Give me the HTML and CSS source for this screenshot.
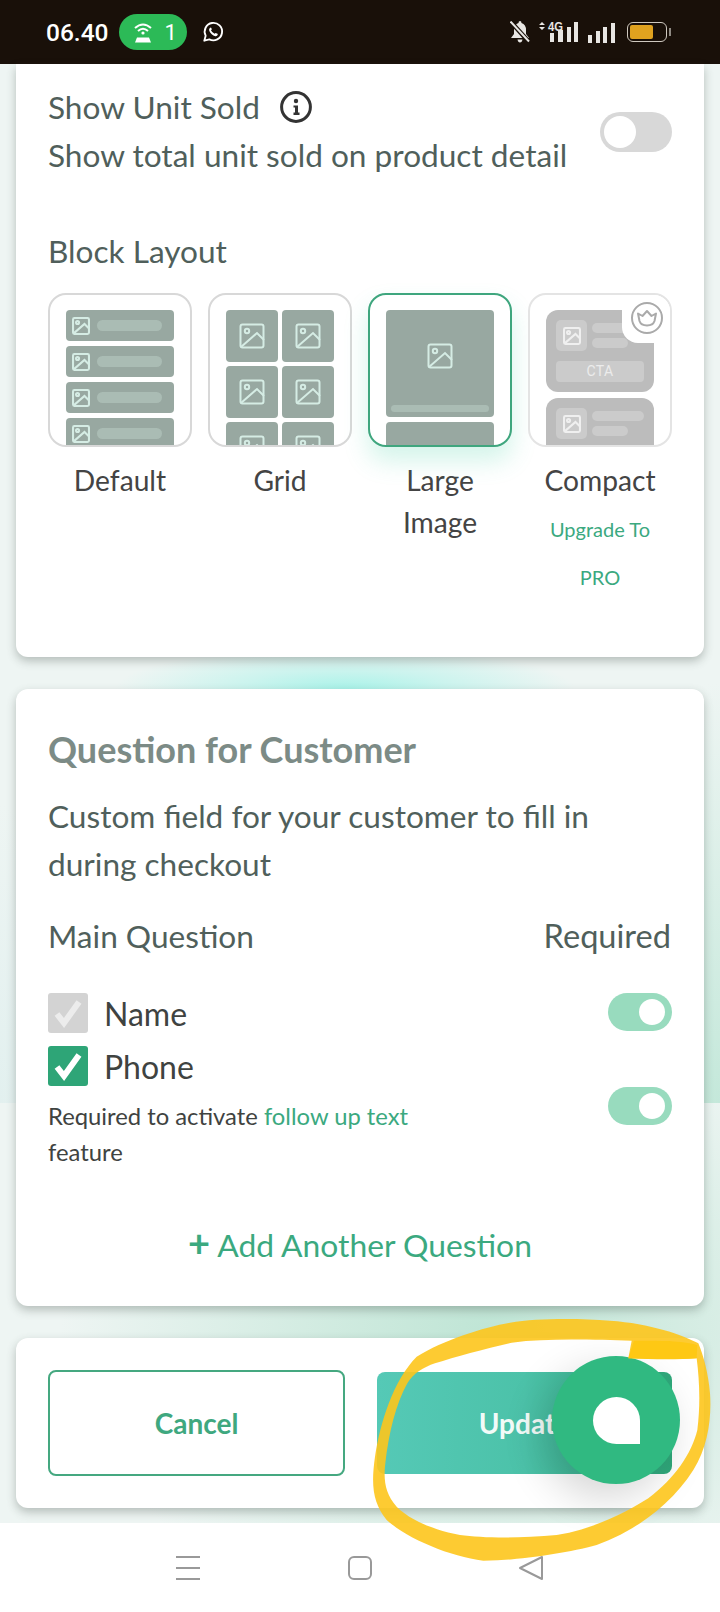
FILE: index.html
```html
<!DOCTYPE html>
<html lang="en">
<head>
<meta charset="utf-8">
<title>Block Layout</title>
<link rel="stylesheet" href="styles.css">
</head>
<body>
<svg class="defs" width="0" height="0" aria-hidden="true">
  <symbol id="pic" viewBox="0 0 26 26">
    <rect x="1.5" y="1.5" width="23" height="23" rx="2" fill="none" stroke="currentColor"/>
    <circle cx="8" cy="8" r="2.2" fill="none" stroke="currentColor"/>
    <path d="M2 24 L18 10 L25 17" fill="none" stroke="currentColor"/>
  </symbol>
</svg>
<div class="phone">
  <header class="status">
    <div class="status-left">
      <span class="time">06.40</span>
      <span class="hotspot">
        <svg class="hot-icon" viewBox="0 0 20 21"><path d="M2 6 Q10 -1 18 6 M5 9 Q10 4.5 15 9" fill="none" stroke="#fff" stroke-width="2"/><circle cx="10" cy="11" r="1.6" fill="#fff"/><path d="M2 20.5 L4 15.5 H16 L18 20.5 Z" fill="#fff"/></svg>
        <span>1</span>
      </span>
      <svg class="wa" viewBox="0 0 24 24"><path d="M2.5 21.5 L4 16 A9.5 9.5 0 1 1 8 20 Z" fill="none" stroke="#fff" stroke-width="2" stroke-linejoin="round"/><path d="M8.5 7.5 Q7.2 9 8 11 Q10 15.5 14.5 16.5 Q16.5 16.8 17.2 15 L17 14 L14.8 13 L13.8 14 Q11 13 9.8 10.2 L10.8 9 L9.8 7 Z" fill="#fff"/></svg>
    </div>
    <div class="status-right">
      <svg class="bell" viewBox="0 0 20 22"><path d="M10 0 Q11.5 0 11.5 2 Q16 3.5 16 9 V13 L19 17 H1 L4 13 V9 Q4 3.5 8.5 2 Q8.5 0 10 0 Z M7.5 18.5 H12.5 Q12 21.5 10 21.5 Q8 21.5 7.5 18.5 Z" fill="#e8e6e3"/><path d="M1 1 L19 21" stroke="#191009" stroke-width="4.5"/><path d="M0.5 0.5 L19 20.5" stroke="#e8e6e3" stroke-width="2"/></svg>
      <svg class="signal" viewBox="0 0 40 22"><path d="M0 4 L3 1 L6 4 Z M0 6 L3 9 L6 6 Z" fill="#e8e6e3"/><rect x="11" y="12" width="4" height="9" fill="#e8e6e3"/><rect x="19" y="9" width="5" height="12" fill="#e8e6e3"/><rect x="28" y="6" width="4" height="15" fill="#e8e6e3"/><rect x="35" y="1" width="4" height="20" fill="#e8e6e3"/><text x="9" y="10" class="lte" textLength="15" lengthAdjust="spacingAndGlyphs">4G</text></svg>
      <svg class="signal2" viewBox="0 0 28 21"><rect x="0" y="13" width="4" height="8" fill="#e8e6e3"/><rect x="8" y="9" width="4" height="12" fill="#e8e6e3"/><rect x="15" y="5" width="4" height="16" fill="#e8e6e3"/><rect x="23" y="1" width="4" height="20" fill="#e8e6e3"/></svg>
      <span class="battery"><span class="battery-fill"></span></span>
    </div>
  </header>

  <main class="content">
    <section class="card card-top">
      <div class="unit-row">
        <div class="unit-text">
          <div class="line unit-title">Show Unit Sold
            <svg class="info" viewBox="0 0 32 32"><circle cx="16" cy="16" r="14.4" fill="none" stroke="#333" stroke-width="3"/><circle cx="16" cy="10" r="2.2" fill="#333"/><path d="M13.5 14.5 H18 V21.5 H19.5 V24 H13.5 V21.5 H15 V16.5 H13.5 Z" fill="#333"/></svg>
          </div>
          <div class="line">Show total unit sold on product detail</div>
        </div>
        <span class="toggle toggle-off"><span class="knob"></span></span>
      </div>

      <h3 class="line block-title">Block Layout</h3>
      <div class="layouts">
        <div class="layout">
          <div class="tile">
            <div class="preview stack">
              <div class="row"><svg class="pic-s"><use href="#pic"/></svg><i class="bar"></i></div>
              <div class="row"><svg class="pic-s"><use href="#pic"/></svg><i class="bar"></i></div>
              <div class="row"><svg class="pic-s"><use href="#pic"/></svg><i class="bar"></i></div>
              <div class="row"><svg class="pic-s"><use href="#pic"/></svg><i class="bar"></i></div>
            </div>
          </div>
          <div class="layout-name">Default</div>
        </div>
        <div class="layout">
          <div class="tile">
            <div class="preview gridded">
              <div class="cell"><svg class="pic-m"><use href="#pic"/></svg></div>
              <div class="cell"><svg class="pic-m"><use href="#pic"/></svg></div>
              <div class="cell"><svg class="pic-m"><use href="#pic"/></svg></div>
              <div class="cell"><svg class="pic-m"><use href="#pic"/></svg></div>
              <div class="cell"><svg class="pic-m"><use href="#pic"/></svg></div>
              <div class="cell"><svg class="pic-m"><use href="#pic"/></svg></div>
            </div>
          </div>
          <div class="layout-name">Grid</div>
        </div>
        <div class="layout">
          <div class="tile tile-on">
            <div class="preview stack">
              <div class="big"><svg class="pic-m"><use href="#pic"/></svg><i class="big-bar"></i></div>
              <div class="big"></div>
            </div>
          </div>
          <div class="layout-name">Large Image</div>
        </div>
        <div class="layout">
          <div class="tile tile-pro">
            <div class="preview stack-pro">
              <div class="pro">
                <div class="pro-top">
                  <span class="pro-pic"><svg class="pic-s"><use href="#pic"/></svg></span>
                  <span class="pro-bars"><i></i><i class="short"></i></span>
                </div>
                <div class="cta">CTA</div>
              </div>
              <div class="pro">
                <div class="pro-top">
                  <span class="pro-pic"><svg class="pic-s"><use href="#pic"/></svg></span>
                  <span class="pro-bars"><i></i><i class="short"></i></span>
                </div>
              </div>
            </div>
            <span class="crown">
              <svg viewBox="0 0 34 34"><circle cx="17" cy="17" r="15" fill="none" stroke="#aaa" stroke-width="2"/><path d="M8 12.5 L12.5 15 L17 10 L21.5 15 L26 12.5 L24.5 20 Q23 24.5 17 24.5 Q11 24.5 9.5 20 Z" fill="none" stroke="#aaa" stroke-width="2" stroke-linejoin="round"/></svg>
            </span>
          </div>
          <div class="layout-name">Compact</div>
          <div class="upgrade">Upgrade To PRO</div>
        </div>
      </div>
    </section>

    <section class="card card-q">
      <h2 class="q-title">Question for Customer</h2>
      <p class="q-desc">Custom field for your customer to fill in during checkout</p>
      <div class="q-head"><span>Main Question</span><span class="q-required">Required</span></div>
      <div class="q-body">
        <div class="q-list">
          <div class="check-row"><span class="check check-off"><svg viewBox="0 0 40 40"><path d="M9 21 L16 30 L31 9" fill="none" stroke="currentColor" stroke-width="6"/></svg></span><span>Name</span></div>
          <div class="check-row"><span class="check check-on"><svg viewBox="0 0 40 40"><path d="M9 21 L16 30 L31 9" fill="none" stroke="currentColor" stroke-width="6"/></svg></span><span>Phone</span></div>
          <p class="q-note">Required to activate <span class="link">follow up text</span> feature</p>
        </div>
        <div class="q-toggles">
          <span class="toggle toggle-on"><span class="knob"></span></span>
          <span class="toggle toggle-on"><span class="knob"></span></span>
        </div>
      </div>
      <div class="add"><span class="plus">+</span> Add Another Question</div>
    </section>

    <section class="card card-actions">
      <button class="btn btn-cancel">Cancel</button>
      <button class="btn btn-update">Update</button>
    </section>
  </main>

  <nav class="navbar">
    <svg class="nav-menu" viewBox="0 0 26 26"><path d="M1 2 H25 M1 13 H25 M1 24 H25" stroke="#999" stroke-width="2"/></svg>
    <svg class="nav-home" viewBox="0 0 26 26"><rect x="2" y="2" width="22" height="22" rx="5" fill="none" stroke="#999" stroke-width="2"/></svg>
    <svg class="nav-back" viewBox="0 0 26 26"><path d="M2 13 L24 2 V24 Z" fill="none" stroke="#999" stroke-width="2" stroke-linejoin="round"/></svg>
  </nav>

  <div class="fab"><span class="bubble"></span></div>
  <svg class="scribble" viewBox="0 0 1110 966"><path fill-rule="evenodd" d="M1045 160 C1000 135 900 100 780 92 C680 85 560 85 480 98 C400 112 280 150 200 200 C130 270 90 400 75 500 C62 590 70 640 110 690 C170 745 300 800 400 812 C500 812 650 790 740 765 C850 725 960 650 1030 540 C1075 470 1085 380 1080 310 C1075 250 1060 195 1045 160 Z M1040 205 C1048 270 1052 340 1042 420 C1025 490 975 565 895 625 C815 675 720 720 620 735 C520 745 400 745 330 735 C250 720 180 690 140 650 C105 610 100 570 106 520 C116 430 138 340 172 280 C190 250 220 232 255 220 C315 200 400 178 485 158 C600 143 740 150 845 152 L835 205 C900 205 980 210 1040 205 Z" fill="#fdc51c" opacity=".9"/><path d="M852 152 C920 152 990 150 1042 165 L1040 205 C980 210 900 208 835 205 Z" fill="#fec814"/></svg>
</div>
</body>
</html>
```
FILE: styles.css
```css
* { box-sizing: border-box; }
html, body { margin: 0; padding: 0; }
body { font-family: Lato, "Liberation Sans", sans-serif; color: #505f5b; background: #fff; }
.defs { position: absolute; }
.phone { position: relative; width: 720px; height: 1612px; overflow: hidden; display: flex; flex-direction: column; }

.status { height: 64px; background: #191009; display: flex; justify-content: space-between; align-items: center; padding: 0 49px 0 46px; color: #fff; flex: none; }
.status-left, .status-right { display: flex; align-items: center; }
.time { font-size: 24.5px; font-weight: 500; font-family: Roboto, sans-serif; }
.hotspot { margin-left: 10px; width: 68px; height: 36px; border-radius: 18px; background: #2cba57; display: flex; align-items: center; padding-left: 14px; gap: 12px; font-family: Roboto, sans-serif; font-size: 22px; }
.hot-icon { width: 20px; height: 21px; }
.wa { width: 22px; height: 22px; margin-left: 15px; }
.bell { width: 20px; height: 22px; }
.signal { width: 40px; height: 22px; margin-left: 9px; }
.lte { font: bold 12px "Liberation Sans", sans-serif; fill: #e8e6e3; }
.signal2 { width: 28px; height: 21px; margin-left: 9px; }
.battery { width: 40px; height: 20px; border: 1.5px solid #cfc9c0; border-radius: 6px; margin-left: 11px; margin-right: 4px; padding: 1.5px; display: block; position: relative; }
.battery::after { content: ""; position: absolute; right: -5px; top: 4.5px; width: 2px; height: 8px; background: #8f8a83; }
.battery-fill { display: block; width: 23px; height: 14px; background: #e0a21f; border-radius: 2px; }

.content { flex: 1; min-height: 0; padding: 0 16px 15px; display: flex; flex-direction: column; gap: 32px; background-color: #eef5f3; background-repeat: no-repeat;
  background-image:
    radial-gradient(ellipse 230px 42px at 345px 625px, #a9f3e9 0%, rgba(175,243,234,.55) 45%, rgba(238,245,243,0) 100%),
    radial-gradient(ellipse 300px 420px at 720px 1039px, #c4e8da 0%, rgba(196,232,218,0) 100%),
    radial-gradient(ellipse 80px 300px at 0 1039px, #e2f0ef 0%, rgba(226,240,239,0) 100%),
    radial-gradient(ellipse 430px 300px at 490px 1266px, #bfe5d5 0%, rgba(191,229,213,0) 100%);
  background-size: 720px 1459px, 720px 1039px, 720px 1039px, 720px 1459px;
}
.card { background: #fff; border-radius: 12px; box-shadow: 0 4px 10px rgba(60,70,66,.32); padding: 0 32px; flex: none; }
.card-top { height: 593px; border-radius: 0 0 12px 12px; padding-top: 19px; }
.line { font-size: 31.6px; line-height: 48px; color: #505f5b; margin: 0; font-weight: 400; }

.unit-row { display: flex; justify-content: space-between; align-items: center; }
.unit-title { display: flex; align-items: center; gap: 20px; }
.info { width: 32px; height: 32px; }
.toggle { display: block; border-radius: 20px; position: relative; flex: none; }
.toggle-off { width: 72px; height: 40px; background: #d8d8d8; margin-top: 2px; }
.toggle-off .knob { position: absolute; left: 4px; top: 4px; width: 32px; height: 32px; background: #fff; border-radius: 50%; }
.toggle-on { width: 64px; height: 38px; background: #98dbbe; }
.toggle-on .knob { position: absolute; right: 7px; top: 6px; width: 26px; height: 26px; background: #fff; border-radius: 50%; }

.block-title { margin-top: 48px; margin-bottom: 18px; }
.layouts { display: grid; grid-template-columns: repeat(4, 144px); gap: 16px; }
.layout { text-align: center; }
.tile { position: relative; height: 154px; border: 2px solid #d8d8d8; border-radius: 18px; padding: 15px 16px 0; overflow: hidden; background: #fff; color: #d5ece4; }
.tile-on { border-color: #3fa67e; box-shadow: 0 14px 24px rgba(60,205,160,.22); overflow: visible; }
.tile-on .preview { overflow: hidden; height: 135px; }
.tile-pro { border-color: #e4e4e4; }
.preview { width: 108px; }
.stack { display: flex; flex-direction: column; gap: 5px; }
.row { flex: none; height: 31px; background: #98a8a1; border-radius: 4px; display: flex; align-items: center; padding-left: 6px; gap: 7px; }
.pic-s { width: 18px; height: 18px; flex: none; display: block; stroke-width: 3; }
.pic-m { width: 26px; height: 26px; display: block; stroke-width: 2; }
.bar { width: 65px; height: 11px; border-radius: 6px; background: #aabcb4; display: block; }
.gridded { display: grid; grid-template-columns: 52px 52px; gap: 4px; }
.cell { height: 52px; background: #98a8a1; border-radius: 4px; display: flex; align-items: center; justify-content: center; }
.big { flex: none; height: 107px; background: #98a8a1; border-radius: 4px; position: relative; display: flex; justify-content: center; padding-top: 33px; }
.big-bar { position: absolute; left: 5px; right: 5px; bottom: 5px; height: 7px; border-radius: 4px; background: #aabcb4; }
.stack-pro { display: flex; flex-direction: column; gap: 6px; }
.pro { flex: none; background: #bcbcbc; border-radius: 12px; padding: 10px; height: 82px; }
.pro-top { display: flex; gap: 5px; align-items: flex-start; }
.pro-pic { width: 31px; height: 31px; background: #cbcbcb; border-radius: 5px; display: flex; align-items: center; justify-content: center; color: #efefef; flex: none; }
.pro-bars { flex: 1; display: flex; flex-direction: column; gap: 5px; padding-top: 3px; }
.pro-bars i { display: block; height: 10px; border-radius: 5px; background: #cbcbcb; }
.pro-bars i.short { width: 36px; }
.cta { margin-top: 10px; height: 21px; border-radius: 4px; background: #cbcbcb; color: #ececec; font: 14px/21px Roboto, sans-serif; text-align: center; letter-spacing: .3px; }
.crown { position: absolute; right: -2px; top: -2px; width: 50px; height: 50px; background: #fff; border-radius: 0 16px 0 16px; display: flex; align-items: center; justify-content: center; }
.crown svg { width: 34px; height: 34px; }
.layout-name { margin-top: 12px; font-size: 28.2px; line-height: 42px; color: #444; }
.upgrade { margin-top: 4px; font-size: 20px; line-height: 48px; color: #3ba97f; padding: 0 20px; }

.card-q { height: 617px; padding-top: 34px; }
.q-title { margin: 0; font-size: 36px; line-height: 52px; font-weight: 700; color: #7c8b86; }
.q-desc { margin: 17px 0 0; font-size: 31.6px; line-height: 48px; }
.q-head { display: flex; justify-content: space-between; font-size: 31.6px; line-height: 48px; margin-top: 24px; }
.q-required { font-size: 32.6px; margin-right: 1px; }
.q-body { display: flex; justify-content: space-between; margin-top: 33px; }
.q-list { width: 400px; }
.check-row { display: flex; align-items: center; gap: 16px; height: 40px; margin-bottom: 13px; font-size: 32px; color: #3f4341; }
.check { width: 40px; height: 40px; border-radius: 3px; display: block; flex: none; }
.check svg { display: block; width: 40px; height: 40px; }
.check-off { background: #d3d3d3; color: #ececec; }
.check-on { background: #2ea577; color: #fff; }
.q-note { margin: -1px 0 0; font-size: 23.8px; line-height: 36px; color: #3f4341; }
.link { color: #3ba97f; }
.q-toggles { display: flex; flex-direction: column; gap: 56px; }
.add { margin-top: 51px; text-align: center; font-size: 31.8px; line-height: 48px; color: #3ba97f; }
.plus { font-weight: 700; font-size: 38px; line-height: 40px; }

.card-actions { height: 170px; display: flex; justify-content: space-between; align-items: center; padding: 0 32px; }
.btn { font-family: Lato, sans-serif; font-weight: 700; font-size: 28px; border-radius: 8px; }
.btn-cancel { width: 297px; height: 106px; background: #fff; border: 2px solid #45a880; color: #3fa87f; }
.btn-update { width: 295px; height: 102px; border: 0; color: #f2fbf8; background: linear-gradient(to right, #55c9b6 0%, #4cc2a9 50%, #2fa87a 100%); }

.navbar { height: 89px; flex: none; background: #fff; display: flex; align-items: flex-start; padding-top: 32px; position: relative; }
.nav-menu { width: 26px; height: 26px; margin-left: 175px; }
.nav-home { width: 26px; height: 26px; margin-left: 146px; }
.nav-back { width: 26px; height: 26px; margin-left: 145px; }

.fab { position: absolute; left: 552px; top: 1356px; width: 128px; height: 128px; border-radius: 50%; background: #30b981; display: flex; align-items: center; justify-content: center; box-shadow: -10px 14px 40px rgba(0,0,0,.16); }
.bubble { width: 47px; height: 47px; background: #fff; border-radius: 50% 50% 0 50%; display: block; }
.scribble { position: absolute; left: 350px; top: 1290px; width: 370px; height: 322px; pointer-events: none; filter: blur(.7px); }
```
